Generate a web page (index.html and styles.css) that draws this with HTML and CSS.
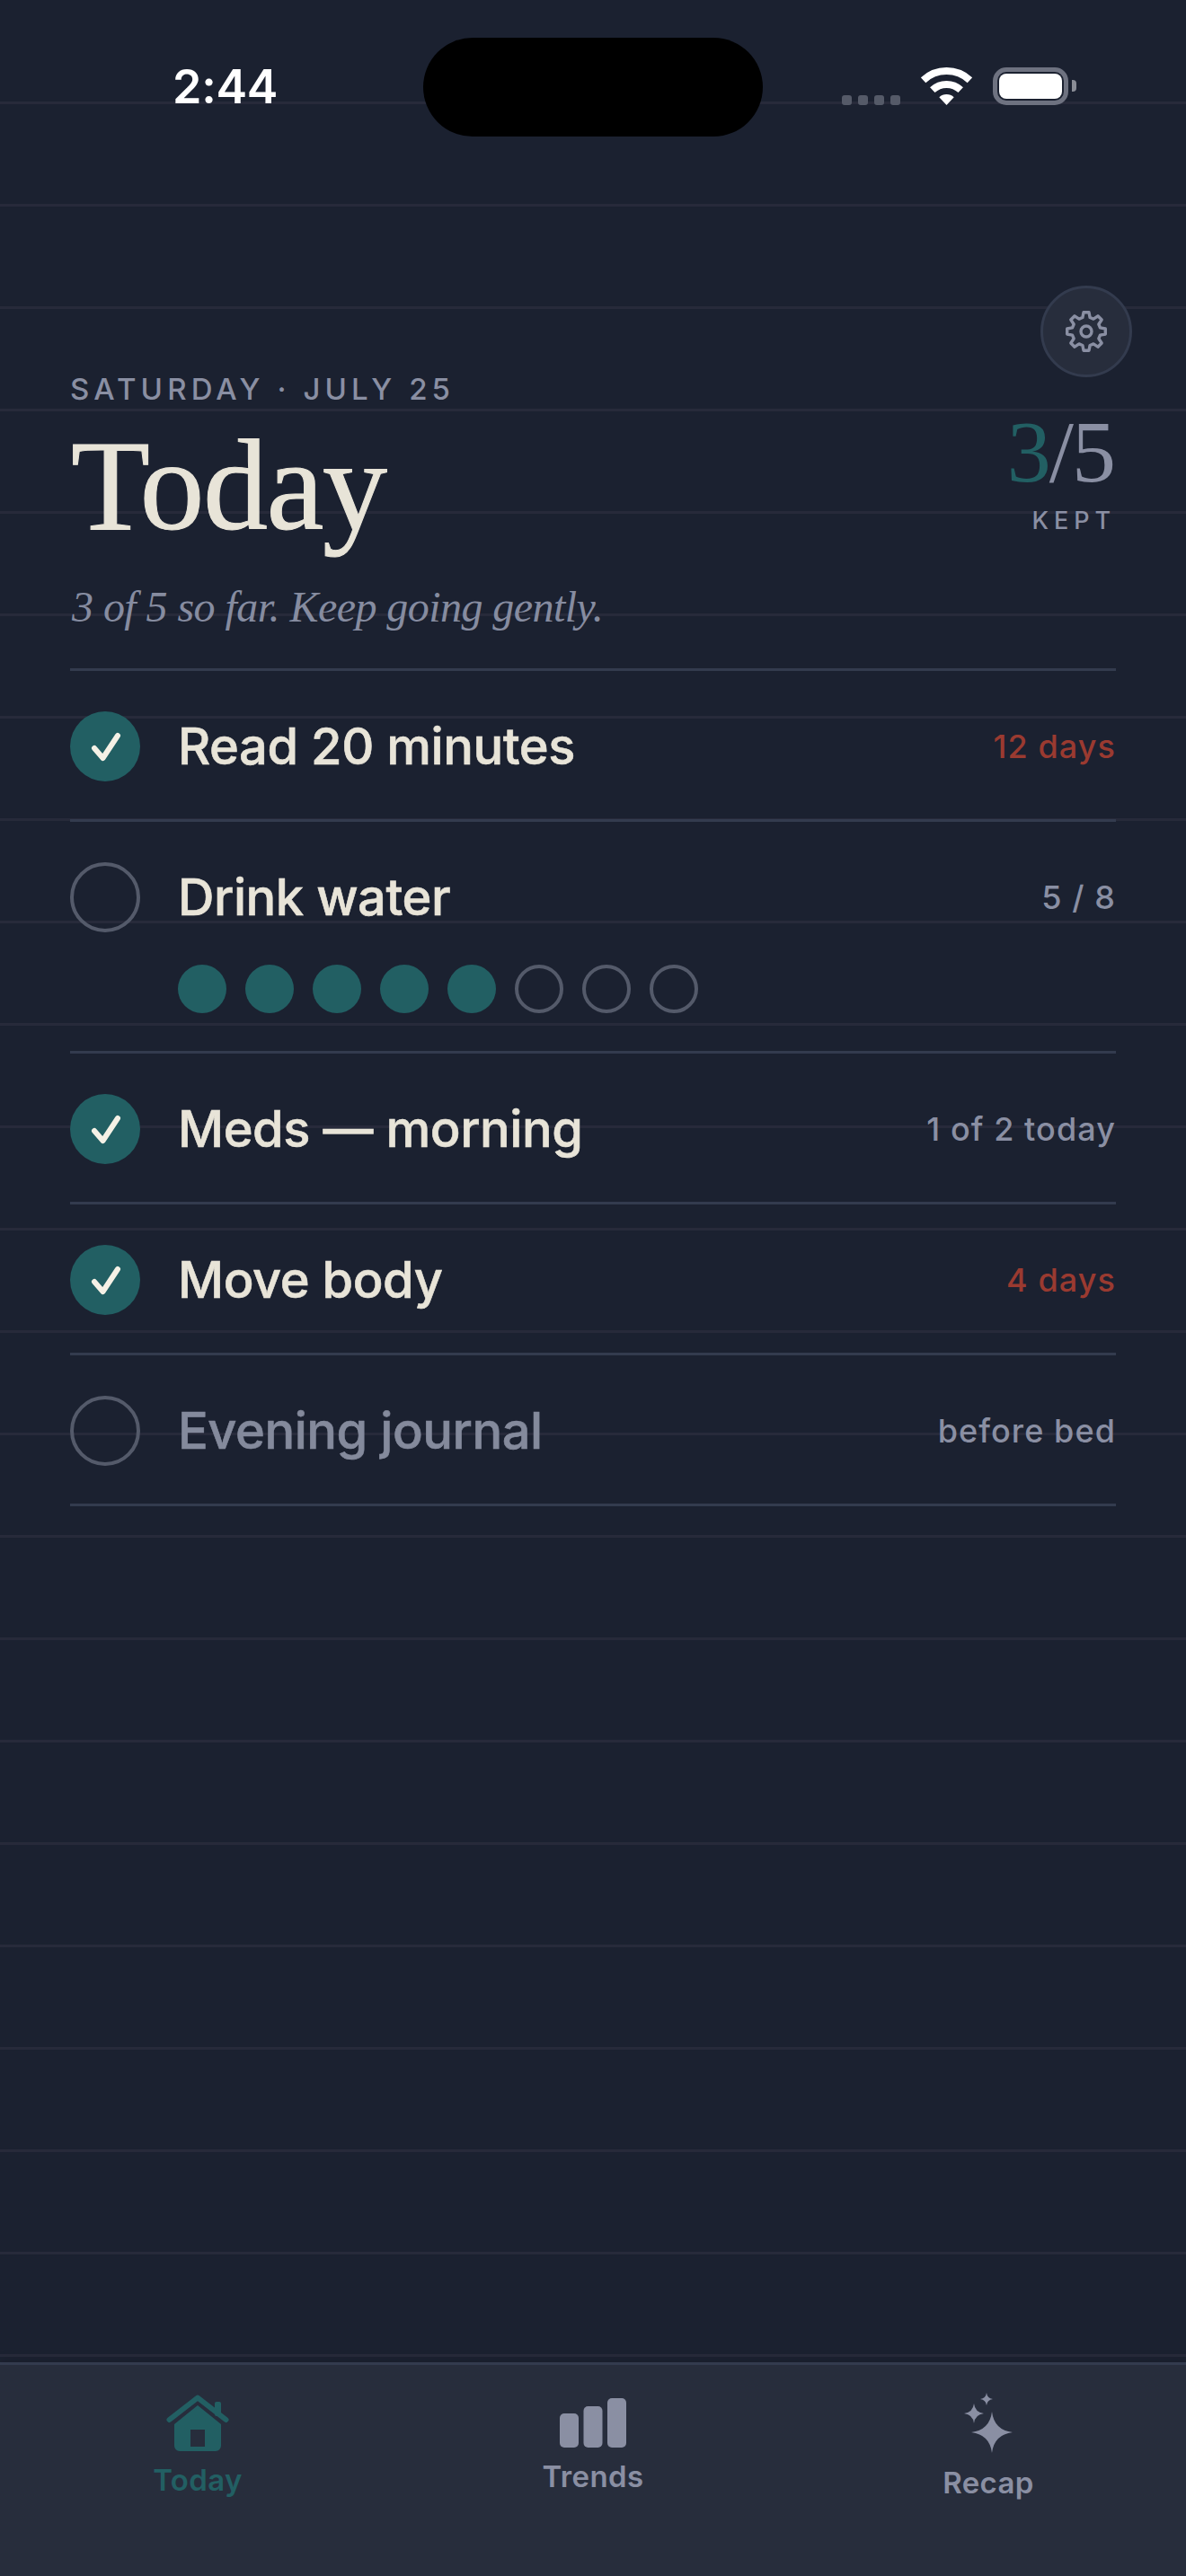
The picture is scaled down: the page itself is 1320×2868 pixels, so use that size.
FILE: index.html
```html
<!DOCTYPE html>
<html lang="en">
<head>
<meta charset="utf-8">
<title>Today</title>
<link rel="stylesheet" href="styles.css">
</head>
<body>
<div class="screen">
  <header class="status">
    <div class="time">2:44</div>
    <div class="island"></div>
    <div class="status-right">
      <div class="signal"><i></i><i></i><i></i><i></i></div>
      <svg class="wifi" viewBox="0 0 57 42" width="57" height="42">
        <path class="wifi-arc" d="M2.6 14.2A38 38 0 0 1 54.4 14.2"/>
        <path class="wifi-arc" d="M12.8 25.2A23 23 0 0 1 44.2 25.2"/>
        <path class="wifi-fill" d="M28.5 42L20.3 33.2A12 12 0 0 1 36.7 33.2Z"/>
      </svg>
      <div class="battery"><div class="battery-body"><div class="battery-fill"></div></div><div class="battery-cap"></div></div>
    </div>
  </header>

  <button class="gear" aria-label="Settings">
    <svg viewBox="0 0 48 48" width="48" height="48" class="gear-icon">
      <path d="M21.01 2.71L26.99 2.71L28.14 8.55L32 10.14L36.94 6.82L41.18 11.06L37.86 16L39.45 19.86L45.29 21.01L45.29 26.99L39.45 28.14L37.86 32L41.18 36.94L36.94 41.18L32 37.86L28.14 39.45L26.99 45.29L21.01 45.29L19.86 39.45L16 37.86L11.06 41.18L6.82 36.94L10.14 32L8.55 28.14L2.71 26.99L2.71 21.01L8.55 19.86L10.14 16L6.82 11.06L11.06 6.82L16 10.14L19.86 8.55Z"/>
      <circle cx="24" cy="24" r="6"/>
    </svg>
  </button>

  <main class="content">
    <section class="head">
      <div class="head-left">
        <div class="eyebrow">SATURDAY · JULY 25</div>
        <h1 class="title">Today</h1>
        <p class="sub">3 of 5 so far. Keep going gently.</p>
      </div>
      <div class="score">
        <div class="score-num"><span class="score-done">3</span>/5</div>
        <div class="score-label">KEPT</div>
      </div>
    </section>

    <ul class="list">
      <li class="row">
        <div class="row-main">
          <span class="check done"><svg viewBox="0 0 78 78" width="78" height="78"><path d="M27 41L36.5 52L53 27"/></svg></span>
          <span class="name">Read 20 minutes</span>
          <span class="meta streak">12 days</span>
        </div>
      </li>
      <li class="row">
        <div class="row-main">
          <span class="check"></span>
          <span class="name">Drink water</span>
          <span class="meta">5 / 8</span>
        </div>
        <div class="dots">
          <i class="dot on"></i><i class="dot on"></i><i class="dot on"></i><i class="dot on"></i><i class="dot on"></i><i class="dot"></i><i class="dot"></i><i class="dot"></i>
        </div>
      </li>
      <li class="row">
        <div class="row-main">
          <span class="check done"><svg viewBox="0 0 78 78" width="78" height="78"><path d="M27 41L36.5 52L53 27"/></svg></span>
          <span class="name">Meds — morning</span>
          <span class="meta">1 of 2 today</span>
        </div>
      </li>
      <li class="row">
        <div class="row-main">
          <span class="check done"><svg viewBox="0 0 78 78" width="78" height="78"><path d="M27 41L36.5 52L53 27"/></svg></span>
          <span class="name">Move body</span>
          <span class="meta streak">4 days</span>
        </div>
      </li>
      <li class="row">
        <div class="row-main">
          <span class="check"></span>
          <span class="name muted">Evening journal</span>
          <span class="meta">before bed</span>
        </div>
      </li>
    </ul>
  </main>

  <nav class="tabs">
    <div class="tab active">
      <svg class="tab-icon" viewBox="0 -2 120 68" width="120" height="68">
        <path class="roof" d="M28.5 28L60 3.5L91.5 28"/>
        <rect class="fill" x="79" y="8" width="7" height="16" rx="2"/>
        <path class="fill" fill-rule="evenodd" d="M60 12L86 33V57a6 6 0 0 1-6 6H40a6 6 0 0 1-6-6V33ZM52 39V58H68V39Z"/>
      </svg>
      <span class="tab-label label-today">Today</span>
    </div>
    <div class="tab">
      <svg class="tab-icon" viewBox="0 -2 120 68" width="120" height="68">
        <rect class="fill" x="23" y="21" width="21" height="38" rx="5"/>
        <rect class="fill" x="49.5" y="13" width="21" height="46" rx="5"/>
        <rect class="fill" x="76" y="4" width="21" height="55" rx="5"/>
      </svg>
      <span class="tab-label label-trends">Trends</span>
    </div>
    <div class="tab">
      <svg class="tab-icon" viewBox="0 -2 120 68" width="120" height="68">
        <path class="fill" d="M64 19Q66.5 39.5 87 42Q66.5 44.5 64 65Q61.5 44.5 41 42Q61.5 39.5 64 19Z"/>
        <path class="fill" d="M44 10Q45.2 19.8 55 21Q45.2 22.2 44 32Q42.8 22.2 33 21Q42.8 19.8 44 10Z"/>
        <path class="fill" d="M58 -2Q58.8 4.2 65 5Q58.8 5.8 58 12Q57.2 5.8 51 5Q57.2 4.2 58 -2Z"/>
      </svg>
      <span class="tab-label label-recap">Recap</span>
    </div>
  </nav>
</div>
</body>
</html>
```
FILE: styles.css
```css
* { box-sizing: border-box; }
html, body { margin: 0; padding: 0; }
body { width: 1320px; height: 2868px; overflow: hidden; background: #1b2130; font-family: Inter, "Liberation Sans", sans-serif; }

.screen {
  position: relative;
  width: 1320px;
  height: 2868px;
  display: flex;
  flex-direction: column;
  background-color: #1b2130;
  background-image:
    linear-gradient(#1b2130, #1b2130),
    linear-gradient(to bottom, #272a3a 0, #272a3a 3px, transparent 3px);
  background-size: 100% 3px, 100% 114px;
  background-position: 0 0, 0 113px;
  background-repeat: no-repeat, repeat;
}

/* status bar */
.status {
  display: grid;
  grid-template-columns: 471px 378px 471px;
  align-items: center;
  height: 110px;
  margin-top: 42px;
}
.time { padding-left: 192px; color: #fff; font-size: 52px; font-weight: 600; line-height: 60px; letter-spacing: -0.005em; }
.island { height: 110px; background: #000; border-radius: 55px; }
.status-right { display: flex; align-items: flex-end; gap: 23px; padding-left: 88px; margin-top: -3px; }
.signal { display: flex; gap: 7px; }
.signal i { display: block; width: 11px; height: 11px; border-radius: 3px; background: #555a68; }
.wifi { display: block; }
.wifi-arc { fill: none; stroke: #fff; stroke-width: 8; }
.wifi-fill { fill: #fff; }
.battery { display: flex; align-items: center; gap: 4px; }
.battery-body { width: 84px; height: 42px; padding: 2px; border: 5px solid #6e7280; border-radius: 15px; }
.battery-fill { height: 100%; background: #fff; border-radius: 8px; }
.battery-cap { width: 5px; height: 13px; background: #8a8d96; border-radius: 0 4px 4px 0; }

/* gear */
.gear {
  position: absolute;
  top: 318px;
  right: 60px;
  width: 102px;
  height: 102px;
  padding: 0;
  display: flex;
  align-items: center;
  justify-content: center;
  background: #272d3c;
  border: 3px solid #333b4e;
  border-radius: 50%;
}
.gear-icon { fill: none; stroke: #8a8fa3; stroke-width: 3.4; stroke-linecap: round; stroke-linejoin: round; }

/* header */
.content { flex: 1; padding: 261px 78px 0; }
.head { display: flex; justify-content: space-between; align-items: flex-start; padding-bottom: 38px; border-bottom: 3px solid #333b4e; }
.eyebrow { color: #8a8fa3; font-size: 33px; font-weight: 550; line-height: 40px; letter-spacing: 0.155em; }
.title { margin: 13px 0 0 1px; color: #e8e4d8; font-family: "Liberation Serif", serif; font-size: 144px; font-weight: 400; line-height: 150px; letter-spacing: -0.01em; -webkit-text-stroke: 1px #e8e4d8; }
.sub { margin: 30px 0 0 2px; color: #868ca0; font-family: "Liberation Serif", serif; font-style: italic; font-size: 48px; line-height: 60px; letter-spacing: -0.55px; }
.score { margin-top: 40px; text-align: right; }
.score-num { color: #8a8fa3; font-family: "Liberation Serif", serif; font-size: 98px; line-height: 100px; letter-spacing: -2px; padding-right: 2px; }
.score-done { color: #225f63; }
.score-label { margin-top: 12px; color: #8a8fa3; font-size: 27px; font-weight: 500; line-height: 30px; letter-spacing: 0.22em; }

/* list */
.list { list-style: none; margin: 0; padding: 0; }
.row { padding: 45px 0 42px; border-bottom: 3px solid #333b4e; }
.row-main { display: flex; align-items: center; gap: 42px; height: 78px; }
.check { flex: none; width: 78px; height: 78px; border: 4.5px solid #545a6a; border-radius: 50%; }
.check.done { border: 0; background: #225f63; }
.check svg { display: block; fill: none; stroke: #f5f1e6; stroke-width: 6; stroke-linecap: round; stroke-linejoin: round; }
.name { flex: 1; color: #e8e4d8; font-size: 56px; font-weight: 500; line-height: 70px; letter-spacing: -0.008em; -webkit-text-stroke: 0.6px currentColor; }
.name.muted { color: #848a9c; }
.meta { color: #8a8fa3; font-size: 36px; font-weight: 550; line-height: 50px; letter-spacing: 0.03em; }
.meta.streak { color: #9a3a30; }
.dots { display: flex; gap: 21px; margin: 36px 0 0 120px; }
.dot { display: block; width: 54px; height: 54px; border: 4px solid #545a6a; border-radius: 50%; }
.dot.on { border: 0; background: #225f63; }

/* tabs */
.tabs {
  height: 238px;
  padding-top: 31px;
  display: grid;
  grid-template-columns: repeat(3, 440px);
  align-items: start;
  background: #272d3c;
  border-top: 3px solid #333b4e;
  box-shadow: 0 -4px 12px rgba(0, 0, 0, 0.08);
}
.tab { display: flex; flex-direction: column; align-items: center; color: #8a8fa3; }
.tab.active { color: #225f63; }
.tab-icon { display: block; }
.fill { fill: currentColor; }
.roof { fill: none; stroke: currentColor; stroke-width: 6; stroke-linecap: round; stroke-linejoin: round; }
.tab-label { font-size: 33px; font-weight: 600; line-height: 40px; letter-spacing: 0.012em; }
.label-today { margin-top: 9px; }
.label-trends { margin-top: 5px; }
.label-recap { margin-top: 12px; }
```
